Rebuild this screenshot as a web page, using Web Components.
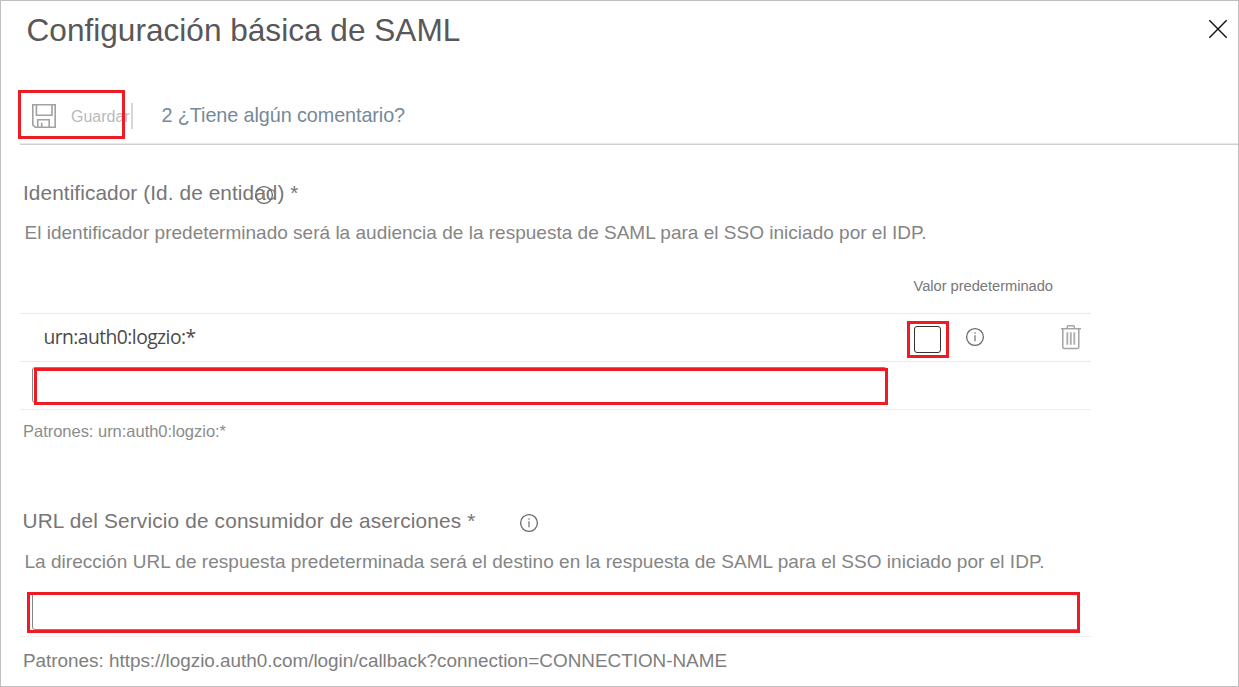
<!DOCTYPE html>
<html lang="es">
<head>
<meta charset="utf-8">
<title>Configuración básica de SAML</title>
<style>
body{margin:0;background:#fff;font-family:"Liberation Sans",Arial,sans-serif}
</style>
</head>
<body>
<saml-panel></saml-panel>
<script>
const define=(name,html,after)=>customElements.define(name,class extends HTMLElement{
  constructor(){super();this.attachShadow({mode:'open'}).innerHTML=html;}
  connectedCallback(){if(after)after(this);}
});

/* A single line of text whose tracking adapts to the measure it is given. */
define('fit-text',`<style>:host{display:block;white-space:nowrap;flex:none}span{display:inline-block}</style><span><slot></slot></span>`,el=>{
  const span=el.shadowRoot.querySelector('span');
  const want=parseFloat(el.getAttribute('measure'));
  const n=el.textContent.length;
  span.style.letterSpacing=((want-span.getBoundingClientRect().width)/n)+'px';
});

define('info-icon',`<style>:host{display:block;width:20px;height:20px;flex:none}svg{display:block}</style>
<svg width="20" height="20" viewBox="0 0 20 20"><circle cx="10" cy="10" r="8.4" fill="none" stroke="#6a6a6a" stroke-width="1.3"/><path d="M10 5.2v1.6M10 8.2v6" stroke="#8a8a8a" stroke-width="1.5"/></svg>`);

define('trash-icon',`<style>:host{display:block;width:20px;height:25px;flex:none}svg{display:block}</style>
<svg width="20" height="25" viewBox="0 0 20 25" fill="none" stroke="#a3a3a3"><path d="M0 3.7H20" stroke-width="1.5"/><path d="M6.3 3.5V1.8Q6.3.8 7.3.8H12.3Q13.3.8 13.3 1.8V3.5" stroke-width="1.4"/><path d="M1.8 4V22Q1.8 23.6 3.4 23.6H16.2Q17.8 23.6 17.8 22V4" stroke-width="1.5"/><path d="M6.3 7.3V19.8M9.8 7.3V19.8M13.3 7.3V19.8" stroke-width="1.9" stroke="#b0b0b0"/></svg>`);

define('save-icon',`<style>:host{display:block;width:24px;height:24px;flex:none}svg{display:block}</style>
<svg width="24" height="24" viewBox="0 0 24 24" fill="none" stroke="#a2a2a2" stroke-width="1.6"><path d="M.8.8H23.2V23.2H3.2L.8 20.8Z"/><path d="M4.4 1V11.2H20V1"/><path d="M5.7 23V15.8H17.2V23M9.7 23V18.8"/></svg>`);

define('close-icon',`<style>:host{display:block;width:20px;height:20px}svg{display:block}</style>
<svg width="20" height="20" viewBox="0 0 20 20"><path d="M1.3 1.3L18.7 18.7M18.7 1.3L1.3 18.7" stroke="#111" stroke-width="1.4"/></svg>`);

define('panel-header',`<style>
:host{display:flex;height:58px;align-items:center;justify-content:space-between;padding:0 10px 0 25.5px;font-size:31.6px;color:#595757}
close-icon{margin-bottom:2px}
</style><fit-text measure="435.5"><slot></slot></fit-text><close-icon></close-icon>`);

define('save-button',`<style>
:host{display:flex;position:relative;box-sizing:border-box;width:107px;height:49px;align-items:center;padding-left:14px;gap:15px;font-size:16px;color:#bababa}
:host::after{content:"";position:absolute;inset:0;border:3px solid #ee1b24}
save-icon{margin-top:3px}fit-text{margin-top:4px}
</style><save-icon></save-icon><fit-text measure="56.5"><slot></slot></fit-text>`);

define('command-bar',`<style>
:host{display:block;padding-left:17px}
.row{display:flex;height:84px;box-sizing:border-box;padding-top:31px;align-items:flex-start}
.sep{width:2px;height:26px;margin:13px 28.5px 0 6px;background:#d6d6d6}
.fb{font-size:19.8px;color:#76899a;line-height:24px;margin-top:12.5px}
.rule{height:1px;margin-left:2px;background:#d0d0d0;border-top:1px solid #e9e9e9}
</style><div class="row"><save-button>Guardar</save-button><div class="sep"></div><fit-text class="fb" measure="243.5">2 ¿Tiene algún comentario?</fit-text></div><div class="rule"></div>`);

define('outlined-input',`<style>
:host{display:block;position:relative;box-sizing:border-box;height:var(--h);width:var(--w);border:3px solid #ee1b24}
:host::before{content:"";position:absolute;border:1px solid #858585;border-radius:3px;inset:var(--inner);z-index:-1}
</style>`);

define('entity-table',`<style>
:host{display:block;width:1071px;margin-left:19px}
.head{display:flex;padding:10px 0 0 893.5px;font-size:14.7px;line-height:20px;box-sizing:border-box;height:47px;color:#787878}
.row{display:flex;box-sizing:border-box;height:48px;border-top:1px solid #eaeaea}
.value{align-items:flex-start;padding:7px 0 0 23.5px}
.urn{font:19.3px/24px "Open Sans","Noto Sans",sans-serif;color:#4a4a4a;margin-top:3.5px;width:863.5px}
.check{box-sizing:border-box;width:42px;height:37px;border:3px solid #ee1b24;padding:2px 0 0 4px}
.check i{display:block;box-sizing:border-box;width:27px;height:27px;border:1px solid #333;border-radius:3px}
info-icon{margin:6px 0 0 16px}trash-icon{margin:4px 0 0 76px}
.edit{padding:6px 0 0 14px;border-bottom:1px solid #eee;height:49px}
outlined-input{--w:854px;--h:37px;--inner:-4px -2px -1px -5px}
</style><div class="head"><fit-text measure="139.5">Valor predeterminado</fit-text></div>
<div class="row value"><div class="urn"><fit-text measure="152">urn:auth0:logzio:*</fit-text></div><div class="check"><i></i></div><info-icon></info-icon><trash-icon></trash-icon></div>
<div class="row edit"><outlined-input></outlined-input></div>`);

define('saml-panel',`<style>
:host{display:block;position:relative;z-index:0;box-sizing:border-box;width:1239px;height:687px;border:1px solid #c0c0c0;overflow:hidden;background:#fff}
section{display:block}
.label{display:flex;position:relative;height:30px;line-height:30px;font-size:20.8px;color:#787575}
.over{position:absolute;left:253px;top:7px}
.desc{font-size:19px;line-height:24px;color:#858585;margin-left:23.5px}
.id{padding-top:33px}
.id .label{padding-left:22px}.id .desc{margin-top:12.5px}
entity-table{margin-top:21.5px}
.pat{margin-left:22px;line-height:24px}
.p1{font-size:16.5px;color:#8c8c8c;margin-top:9px}
.url{padding-top:62.5px}
.url .label{padding-left:21.5px}
.url info-icon{margin:7px 0 0 43px}
.url .desc{margin-top:14.5px}
.url outlined-input{margin:18px 0 0 26px;--w:1053px;--h:41px;--inner:-2px -2px 0 2px}
.line{height:1px;width:1072px;margin:3px 0 0 18px;background:#f0f0f0}
.p2{font-size:18.9px;color:#807e7e;margin-top:11.5px}
</style>
<panel-header>Configuración básica de SAML</panel-header>
<command-bar></command-bar>
<section class="id">
<div class="label"><fit-text measure="275.5">Identificador (Id. de entidad) *</fit-text><info-icon class="over"></info-icon></div>
<fit-text class="desc" measure="902">El identificador predeterminado será la audiencia de la respuesta de SAML para el SSO iniciado por el IDP.</fit-text>
<entity-table></entity-table>
<fit-text class="pat p1" measure="203">Patrones: urn:auth0:logzio:*</fit-text>
</section>
<section class="url">
<div class="label"><fit-text measure="453">URL del Servicio de consumidor de aserciones *</fit-text><info-icon></info-icon></div>
<fit-text class="desc" measure="1020">La dirección URL de respuesta predeterminada será el destino en la respuesta de SAML para el SSO iniciado por el IDP.</fit-text>
<outlined-input></outlined-input>
<div class="line"></div>
<fit-text class="pat p2" measure="704">Patrones: https://logzio.auth0.com/login/callback?connection=CONNECTION-NAME</fit-text>
</section>`);
</script>
</body>
</html>
